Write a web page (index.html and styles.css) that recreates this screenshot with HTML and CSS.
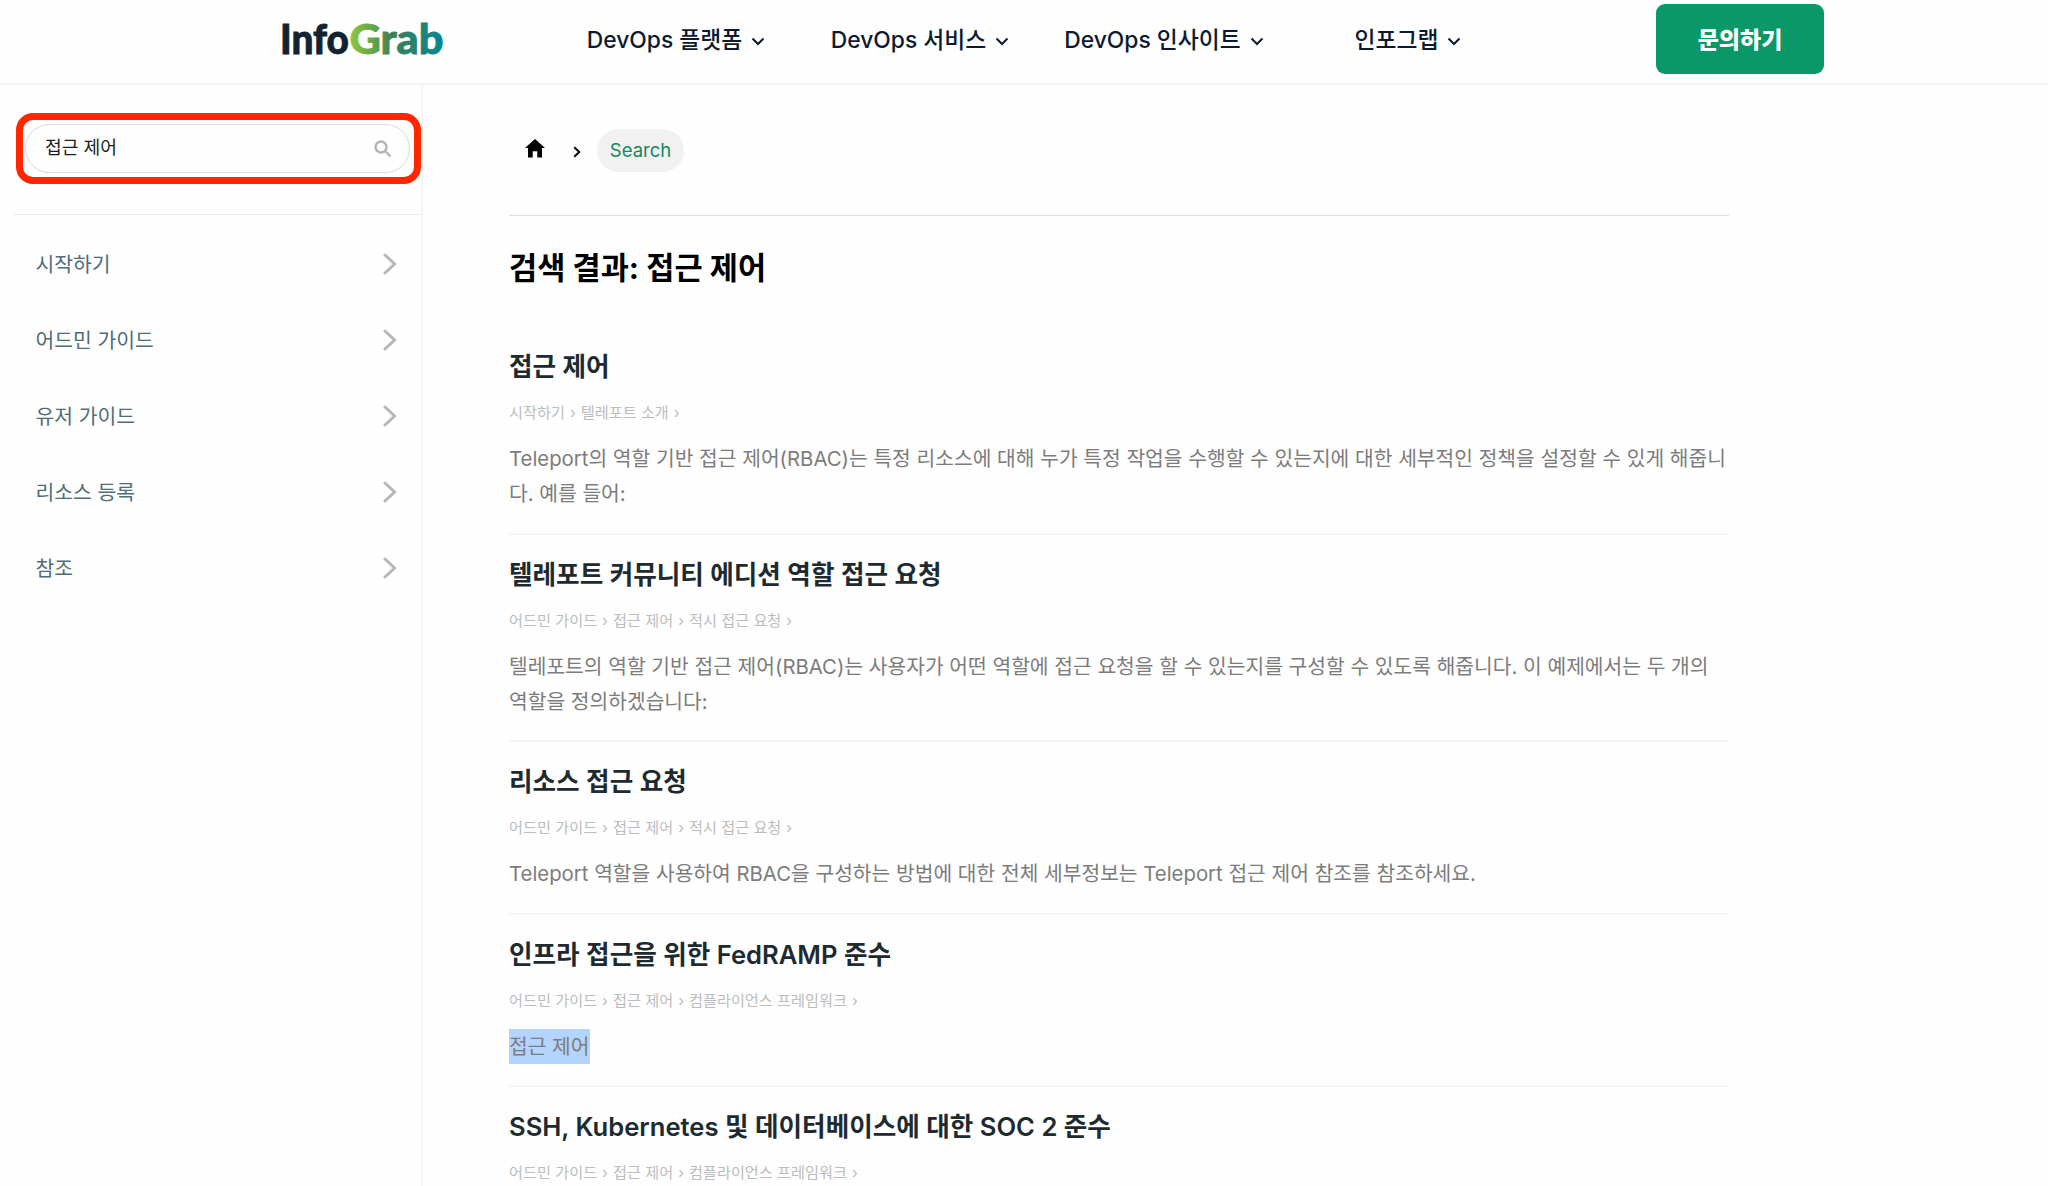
FILE: index.html
```html
<!DOCTYPE html>
<html lang="ko">
<head>
  <meta charset="UTF-8" />
  <meta name="viewport" content="width=device-width, initial-scale=1.0"/>
  <title>검색 결과: 접근 제어</title>
  <link rel="stylesheet" href="styles.css">
</head>
<body>
  <header class="header">
    <a class="logo">
      <svg width="170" height="70" viewBox="0 0 170 70">
        <defs>
          <linearGradient id="grab" gradientUnits="userSpaceOnUse" x1="70" y1="0" x2="162" y2="0">
            <stop offset="0" stop-color="#8cc63f"/>
            <stop offset="0.25" stop-color="#63a548"/>
            <stop offset="0.45" stop-color="#3f8055"/>
            <stop offset="1" stop-color="#078690"/>
          </linearGradient>
        </defs>
        <text class="logo-text" x="0" y="49" textLength="69" lengthAdjust="spacingAndGlyphs" fill="#12222f" stroke="#12222f">Info</text>
        <text class="logo-text" x="69.500" y="49" textLength="94" lengthAdjust="spacingAndGlyphs" fill="url(#grab)" stroke="url(#grab)">Grab</text>
      </svg>
    </a>
    <nav class="nav">
      <a class="nav-item">DevOps 플랫폼 <svg class="caret" viewBox="0 0 14 9"><path d="M1.5 1.5 7 7l5.500-5.500"/></svg></a>
      <a class="nav-item">DevOps 서비스 <svg class="caret" viewBox="0 0 14 9"><path d="M1.5 1.5 7 7l5.500-5.500"/></svg></a>
      <a class="nav-item">DevOps 인사이트 <svg class="caret" viewBox="0 0 14 9"><path d="M1.5 1.5 7 7l5.500-5.500"/></svg></a>
      <a class="nav-item">인포그랩 <svg class="caret" viewBox="0 0 14 9"><path d="M1.5 1.5 7 7l5.500-5.500"/></svg></a>
    </nav>
    <button class="contact" type="button">문의하기</button>
  </header>

  <div class="page">
    <aside class="sidebar">
      <div class="search-mark">
        <div class="search">
          <span class="search-text">접근 제어</span>
          <svg class="search-icon" viewBox="0 0 18 18"><circle cx="7" cy="7" r="5.500"/><path d="M11 11l5.500 5.500"/></svg>
        </div>
      </div>
      <ul class="menu">
        <li><span>시작하기</span><svg class="arrow" viewBox="0 0 14 22"><path d="M2 2l9.500 9L2 20"/></svg></li>
        <li><span>어드민 가이드</span><svg class="arrow" viewBox="0 0 14 22"><path d="M2 2l9.500 9L2 20"/></svg></li>
        <li><span>유저 가이드</span><svg class="arrow" viewBox="0 0 14 22"><path d="M2 2l9.500 9L2 20"/></svg></li>
        <li><span>리소스 등록</span><svg class="arrow" viewBox="0 0 14 22"><path d="M2 2l9.500 9L2 20"/></svg></li>
        <li><span>참조</span><svg class="arrow" viewBox="0 0 14 22"><path d="M2 2l9.500 9L2 20"/></svg></li>
      </ul>
    </aside>

    <main class="content">
      <div class="breadcrumb">
        <svg class="home" viewBox="0 0 20 19"><path d="M10 0 20 9h-3v9.500h-4.700v-6.300H7.700v6.300H3V9H0z"/></svg>
        <svg class="sep" viewBox="0 0 8 12"><path d="M1.300 1.200 6.200 6l-4.900 4.800"/></svg>
        <span class="pill">Search</span>
      </div>
      <h1>검색 결과: 접근 제어</h1>

      <article class="result">
        <h2>접근 제어</h2>
        <div class="path"><span>시작하기</span><span>텔레포트 소개</span></div>
        <p>Teleport의 역할 기반 접근 제어(RBAC)는 특정 리소스에 대해 누가 특정 작업을 수행할 수 있는지에 대한 세부적인 정책을 설정할 수 있게 해줍니<br>다. 예를 들어:</p>
      </article>
      <article class="result">
        <h2>텔레포트 커뮤니티 에디션 역할 접근 요청</h2>
        <div class="path"><span>어드민 가이드</span><span>접근 제어</span><span>적시 접근 요청</span></div>
        <p>텔레포트의 역할 기반 접근 제어(RBAC)는 사용자가 어떤 역할에 접근 요청을 할 수 있는지를 구성할 수 있도록 해줍니다. 이 예제에서는 두 개의<br>역할을 정의하겠습니다:</p>
      </article>
      <article class="result">
        <h2>리소스 접근 요청</h2>
        <div class="path"><span>어드민 가이드</span><span>접근 제어</span><span>적시 접근 요청</span></div>
        <p>Teleport 역할을 사용하여 RBAC을 구성하는 방법에 대한 전체 세부정보는 Teleport 접근 제어 참조를 참조하세요.</p>
      </article>
      <article class="result">
        <h2>인프라 접근을 위한 FedRAMP 준수</h2>
        <div class="path"><span>어드민 가이드</span><span>접근 제어</span><span>컴플라이언스 프레임워크</span></div>
        <p><mark>접근 제어</mark></p>
      </article>
      <article class="result">
        <h2>SSH, Kubernetes 및 데이터베이스에 대한 SOC 2 준수</h2>
        <div class="path"><span>어드민 가이드</span><span>접근 제어</span><span>컴플라이언스 프레임워크</span></div>
      </article>
    </main>
  </div>
</body>
</html>
```
FILE: styles.css
```css
* {
  box-sizing: border-box;
}
body {
  margin: 0;
  height: 1186px;
  overflow: hidden;
  font-family: Inter, 'Noto Sans CJK KR', sans-serif;
  background-color: #fefefe;
  color: #000;
}
svg {
  flex: none;
}
.header {
  height: 85px;
  display: flex;
  align-items: flex-start;
  border-bottom: 2px solid #f5f5f5;
}
.logo {
  width: 554px;
  padding: 5px 0 0 280px;
}
.logo-text {
  font-family: Lato, sans-serif;
  font-weight: 900;
  font-size: 41px;
  stroke-width: 0.8;
}
.nav {
  display: grid;
  grid-template-columns: repeat(4, 244px);
  height: 76px;
}
.nav-item {
  display: flex;
  align-items: center;
  justify-content: center;
  gap: 9px;
  font-size: 22.8px;
  font-weight: 500;
  color: #0b1a30;
}
.caret {
  width: 14px;
  height: 9px;
  margin-top: 7px;
  fill: none;
  stroke: #0b1a30;
  stroke-width: 2;
}
.contact {
  width: 168px;
  height: 70px;
  margin: 4px 0 0 126px;
  padding: 0 0 3px;
  border: none;
  border-radius: 9px;
  background-color: #0a9868;
  color: white;
  font-family: inherit;
  font-size: 23px;
  font-weight: 800;
}
.page {
  display: flex;
  height: 1101px;
}
.sidebar {
  width: 423px;
  border-right: 2px solid #f3f4f5;
  padding: 28px 0 0 14px;
}
.search-mark {
  width: 405px;
  height: 71px;
  margin-left: 2px;
  padding: 4px 3px 3px 2px;
  border: 7px solid #ff2600;
  border-radius: 17px;
}
.search {
  display: flex;
  align-items: center;
  justify-content: space-between;
  width: 385px;
  height: 49px;
  padding: 0 17px 0 19px;
  border: 1px solid #d9d9dc;
  border-radius: 25px;
}
.search-text {
  font-size: 18.2px;
  line-height: 24px;
  padding-bottom: 3px;
  color: #1c1e21;
}
.search-icon {
  width: 18px;
  height: 18px;
  fill: none;
  stroke: #b4b4b4;
  stroke-width: 2.4;
}
.menu {
  list-style: none;
  margin: 30px 0 0;
  padding: 11px 0 0;
  border-top: 1px solid #e9e9e9;
}
.menu li {
  display: flex;
  align-items: center;
  justify-content: space-between;
  height: 76px;
  padding: 0 24px 0 21.5px;
  font-size: 20.4px;
  color: #4f6d78;
}
.menu span {
  padding-bottom: 3px;
}
.arrow {
  width: 14px;
  height: 22px;
  fill: none;
  stroke: #b4b8bc;
  stroke-width: 3;
  stroke-linecap: round;
}
.content {
  width: 1220px;
  margin-left: 86px;
}
.breadcrumb {
  display: flex;
  align-items: center;
  height: 131px;
  border-bottom: 1px solid #dcdcdc;
}
.home {
  width: 20px;
  height: 19px;
  margin: 0 27px 4px 16px;
}
.sep {
  width: 8px;
  height: 12px;
  margin: 4px 16px 0 1px;
  fill: none;
  stroke: #000;
  stroke-width: 2;
}
.pill {
  width: 87px;
  height: 43px;
  border-radius: 22px;
  background-color: #f1f1f1;
  color: #12895c;
  font-size: 18.5px;
  line-height: 43px;
  text-align: center;
}
h1 {
  margin: 32px 0 39px;
  font-size: 30.6px;
  line-height: 40px;
  font-weight: 700;
}
.result {
  padding: 22px 0 21.5px;
  border-bottom: 2px solid #f4f4f4;
}
h2 {
  margin: 0;
  font-size: 25.6px;
  line-height: 36px;
  font-weight: 600;
  color: #1d2b30;
}
.path {
  margin: 14px 0;
  font-size: 15.2px;
  line-height: 28px;
  color: #bcbcbc;
}
.path span::after {
  content: '›';
  margin: 0 5px;
}
.result p {
  margin: 0;
  font-size: 20.34px;
  line-height: 35px;
  color: #7c7c7c;
  white-space: nowrap;
}
mark {
  display: inline-block;
  background-color: #b3d5fd;
  color: inherit;
}
```
